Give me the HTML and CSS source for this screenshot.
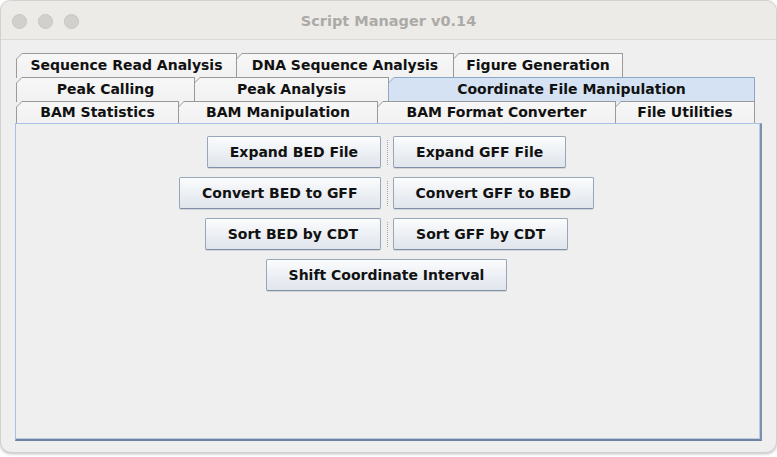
FILE: index.html
```html
<!DOCTYPE html>
<html>
<head>
<meta charset="utf-8">
<title>Script Manager v0.14</title>
<link rel="stylesheet" href="styles.css">
</head>
<body>
<div class="window">
  <div class="titlebar">
    <div class="lights">
      <span class="light"></span>
      <span class="light"></span>
      <span class="light"></span>
    </div>
    <div class="title">Script Manager v0.14</div>
    <div class="spacer"></div>
  </div>
  <div class="content">
    <div class="tabs">
      <div class="tab-row">
        <div class="tab t-seq"><span class="face">Sequence Read Analysis</span></div>
        <div class="tab t-dna"><span class="face">DNA Sequence Analysis</span></div>
        <div class="tab t-fig"><span class="face">Figure Generation</span></div>
      </div>
      <div class="tab-row">
        <div class="tab t-peakc"><span class="face">Peak Calling</span></div>
        <div class="tab t-peaka"><span class="face">Peak Analysis</span></div>
        <div class="tab t-coord selected"><span class="face">Coordinate File Manipulation</span></div>
      </div>
      <div class="tab-row front">
        <div class="tab t-bstat"><span class="face">BAM Statistics</span></div>
        <div class="tab t-bman"><span class="face">BAM Manipulation</span></div>
        <div class="tab t-bfmt"><span class="face">BAM Format Converter</span></div>
        <div class="tab t-futil"><span class="face">File Utilities</span></div>
      </div>
    </div>
    <div class="panel">
      <div class="btn-row">
        <button class="btn">Expand BED File</button>
        <span class="sep"></span>
        <button class="btn">Expand GFF File</button>
      </div>
      <div class="btn-row">
        <button class="btn">Convert BED to GFF</button>
        <span class="sep"></span>
        <button class="btn">Convert GFF to BED</button>
      </div>
      <div class="btn-row">
        <button class="btn">Sort BED by CDT</button>
        <span class="sep"></span>
        <button class="btn">Sort GFF by CDT</button>
      </div>
      <div class="btn-row">
        <button class="btn">Shift Coordinate Interval</button>
      </div>
    </div>
  </div>
</div>
</body>
</html>
```

FILE: styles.css
```css
* { box-sizing: border-box; }

html, body {
  margin: 0;
  padding: 0;
  background: #ffffff;
}

body {
  width: 777px;
  height: 457px;
  overflow: hidden;
  font-family: "DejaVu Sans", "Liberation Sans", sans-serif;
}

.window {
  width: 777px;
  height: 453px;
  border: 1px solid #d3d1ce;
  border-radius: 11px;
  background: #efefef;
  overflow: hidden;
  box-shadow: 0 1px 3px rgba(0, 0, 0, 0.25);
}

.titlebar {
  height: 39px;
  background: #ecebe8;
  border-bottom: 1px solid #dcdad7;
  display: grid;
  grid-template-columns: 1fr auto 1fr;
  align-items: center;
}

.lights {
  display: flex;
  gap: 11px;
  padding-left: 11px;
  padding-top: 2px;
}

.light {
  width: 15px;
  height: 15px;
  border-radius: 50%;
  background: #d2d0cd;
  border: 1px solid #c8c6c3;
}

.title {
  font-weight: bold;
  font-size: 14.5px;
  color: #acaaa7;
  padding-top: 1px;
}

.content {
  padding: 13px 14px 0 14px;
}

.tabs {
  padding-left: 1px;
}

.tab-row {
  display: flex;
  height: 24px;
}

.tab-row.front {
  height: 22px;
}

.tab {
  height: 25px;
  margin-right: -1px;
  padding: 1px 1px 0 1px;
  background: #9a9a9a;
  clip-path: polygon(0 6px, 6px 0, 100% 0, 100% 100%, 0 100%);
  flex: none;
}

.front .tab {
  height: 22px;
}

.face {
  display: block;
  height: 100%;
  background: linear-gradient(#f7f7f7, #f1f1f1);
  clip-path: polygon(0 5px, 5px 0, 100% 0, 100% 100%, 0 100%);
  font-weight: bold;
  font-size: 14px;
  color: #111111;
  text-align: center;
  line-height: 22px;
  white-space: nowrap;
}

.front .face {
  line-height: 21px;
}

.tab.selected {
  background: #8fa6c6;
}

.tab.selected .face {
  background: #d4e2f3;
}

.t-seq { width: 221px; }
.t-dna { width: 218px; }
.t-fig { width: 170px; }
.t-peakc { width: 179px; }
.t-peaka { width: 195px; }
.t-coord { width: 367px; }
.t-bstat { width: 163px; }
.t-bman { width: 200px; }
.t-bfmt { width: 239px; }
.t-futil { width: 140px; }

.panel {
  height: 318px;
  border-top: 1px solid #a9c0e2;
  border-left: 1px solid #a9c0e2;
  border-right: 2px solid #7d8fab;
  border-bottom: 2px solid #6f82a0;
  box-shadow: inset -1px -1px 0 #b9cbe6;
  padding-top: 12px;
  display: flex;
  flex-direction: column;
  gap: 9px;
}

.btn-row {
  display: flex;
  justify-content: center;
  align-items: stretch;
  height: 32px;
  padding-right: 3px;
}

.btn {
  font-family: "DejaVu Sans", "Liberation Sans", sans-serif;
  font-weight: bold;
  font-size: 14px;
  color: #111111;
  padding: 0 22px;
  height: 32px;
  border: 1px solid #98a6b9;
  border-bottom-color: #7f8fa6;
  border-radius: 2px;
  background: linear-gradient(#fbfcfd 0%, #eef1f5 45%, #e0e5ec 100%);
  box-shadow: 0 1px 0 rgba(120, 130, 150, 0.25);
}

.sep {
  width: 1px;
  margin: 4px 5px 3px 6px;
  border-left: 1px dotted #a7a7a7;
}
```
